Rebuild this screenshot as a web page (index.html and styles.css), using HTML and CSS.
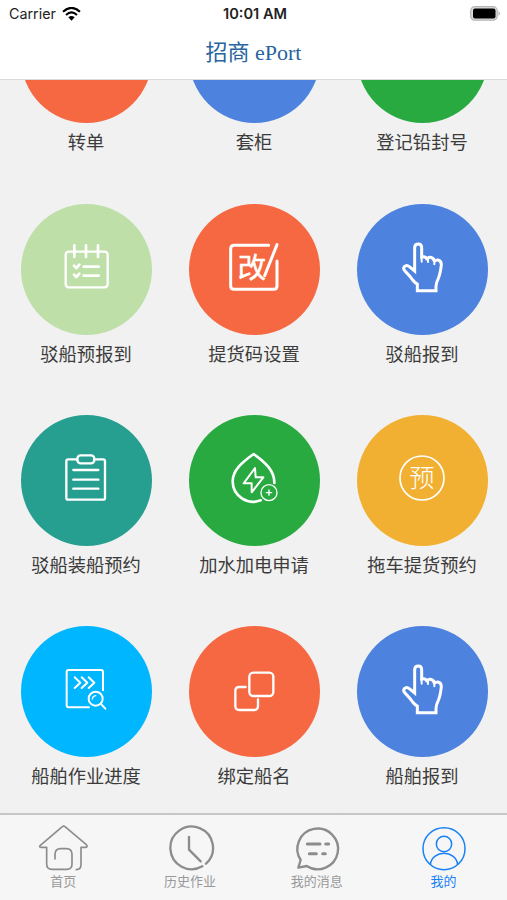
FILE: index.html
```
<!DOCTYPE html>
<html lang="zh-CN">
<head>
	<meta charset="utf-8">
	<meta name="viewport" content="width=device-width, initial-scale=1">
	<title>招商 ePort</title>
	<link rel="stylesheet" href="styles.css">
</head>
<body>

<header>
	<div class="status">
		<div class="carrier">
			<span>Carrier</span>
			<svg width="19" height="14" viewBox="0 0 57 42">
				<path d="M3 14 Q28.500 -9 54 14" class="wifi"/>
				<path d="M12 24 Q28.500 8 45 24" class="wifi"/>
				<path d="M19 31 Q28.500 23 38 31 L28.500 41z"/>
			</svg>
		</div>
		<div class="time">10:01 AM</div>
		<svg class="battery" width="31" height="15" viewBox="0 0 31 15">
			<rect x="0.700" y="0.700" width="26.500" height="13.500" rx="4" fill="#ddd" stroke="#b5b5b5" stroke-width="1.200"/>
			<rect x="3" y="2.500" width="22.500" height="10" rx="2"/>
			<path d="M28.500 5 Q31.500 7.500 28.500 10z" fill="#b5b5b5"/>
		</svg>
	</div>
	<h1>招商 ePort</h1>
</header>

<main>
	<ul class="menu">
		<li><div class="circle red"></div><span>转单</span></li>
		<li><div class="circle blue"></div><span>套柜</span></li>
		<li><div class="circle green"></div><span>登记铅封号</span></li>

		<li>
			<div class="circle lime">
				<svg viewBox="2 11 393 393" stroke-width="7">
					<rect x="136" y="154" width="126" height="107" rx="9"/>
					<path d="M162 135v35M197 135v35M233 135v35" stroke-width="8"/>
					<path d="M190 199h45M190 226h45M161 196l7 7 9-10M161 223l7 7 9-10" stroke-width="8"/>
				</svg>
			</div>
			<span>驳船预报到</span>
		</li>
		<li>
			<div class="circle red">
				<svg viewBox="14 11 393 393" stroke-width="9">
					<path d="M253 135H150q-11 0-11 11V256q0 11 11 11H268q10 0 10-11V182"/>
					<path d="M278 133L241 226"/>
					<text class="bold" x="160" y="233" font-size="85">改</text>
				</svg>
			</div>
			<span>提货码设置</span>
		</li>
		<li>
			<div class="circle blue">
				<svg viewBox="14 11 393 393" stroke-width="9">
					<path class="hand" d="M195 271H251V258Q251 248 258 234Q264 221 267 193Q267 181 257 179Q249 178 246 184Q246 173 234 171Q226 170 225 179Q221 167 208 170V142Q208 131 198 131Q187 131 187 142V212L171 199Q163 192 156 199Q151 206 159 213Q172 226 181 239Q187 247 195 251z"/>
					<path d="M208 170v14M227 177v8M246 184v8" stroke-width="6"/>
				</svg>
			</div>
			<span>驳船报到</span>
		</li>

		<li>
			<div class="circle teal">
				<svg viewBox="2 15 393 393" stroke-width="7">
					<path d="M171 148H144q-6 0-6 6V263q0 6 6 6H248q6 0 6-6V154q0-6-6-6H222"/>
					<rect x="171" y="136" width="51" height="24" rx="10"/>
					<path d="M159 180h75M159 209h75M159 236h75"/>
				</svg>
			</div>
			<span>驳船装船预约</span>
		</li>
		<li>
			<div class="circle green">
				<svg viewBox="14 15 393 393" stroke-width="8">
					<path d="M229 271C191 286 145 259 145 214C145 181 173 157 208 132C242 156 271 182 270 219"/>
					<path d="M212 174L178 220H202V247L237 202H214z" stroke-width="6"/>
					<circle cx="254" cy="248" r="24" stroke-width="4"/>
					<path d="M246 248h16M254 240v16" stroke-width="4"/>
				</svg>
			</div>
			<span>加水加电申请</span>
		</li>
		<li>
			<div class="circle yellow">
				<svg viewBox="14 15 393 393" stroke-width="5">
					<circle cx="209" cy="204" r="66"/>
					<text class="thin" x="171" y="231" font-size="76">预</text>
				</svg>
			</div>
			<span>拖车提货预约</span>
		</li>

		<li>
			<div class="circle sky">
				<svg viewBox="2 18 393 393" stroke-width="6">
					<path d="M206 262H145q-6 0-6-6V156q0-6 6-6H242q6 0 6 6V211"/>
					<path d="M163 172l17 16-17 16M184 172l17 16-17 16M205 172l17 16-17 16"/>
					<circle cx="226" cy="236" r="21"/>
					<path d="M241 251L255 266"/>
					<path d="M216 237q1-9 10-10" stroke-width="4"/>
				</svg>
			</div>
			<span>船舶作业进度</span>
		</li>
		<li>
			<div class="circle red">
				<svg viewBox="14 18 393 393" stroke-width="7">
					<rect x="195" y="158" width="72" height="70" rx="12"/>
					<path d="M184 201H165q-12 0-12 12V258q0 12 12 12H209q12 0 12-12V238"/>
				</svg>
			</div>
			<span>绑定船名</span>
		</li>
		<li>
			<div class="circle blue">
				<svg viewBox="14 11 393 393" stroke-width="9">
					<path class="hand" d="M195 271H251V258Q251 248 258 234Q264 221 267 193Q267 181 257 179Q249 178 246 184Q246 173 234 171Q226 170 225 179Q221 167 208 170V142Q208 131 198 131Q187 131 187 142V212L171 199Q163 192 156 199Q151 206 159 213Q172 226 181 239Q187 247 195 251z"/>
					<path d="M208 170v14M227 177v8M246 184v8" stroke-width="6"/>
				</svg>
			</div>
			<span>船舶报到</span>
		</li>
	</ul>
</main>

<nav>
	<a href="#">
		<svg viewBox="-1 0 150 150" stroke-width="5">
			<path d="M50 105V91q0-17 17-17H84q17 0 17 17V120q0 16-16 16H41q-16 0-16-16V70H8q-7 0-2-6L72 8q4-4 8 0L144 62q5 7-2 8H128V122q0 14-14 15"/>
		</svg>
		<span>首页</span>
	</a>
	<a href="#">
		<svg viewBox="-1 -2 150 150" stroke-width="7">
			<path d="M111 125A64 64 0 1 1 122 117"/>
			<path d="M71 37V75L106 110"/>
		</svg>
		<span>历史作业</span>
	</a>
	<a href="#">
		<svg viewBox="0 0 150 150" stroke-width="7">
			<path d="M44 126L19 131L26 108A61 61 0 1 1 44 126"/>
			<path d="M46 60h38M101 60h9M52 89h21M92 89h8" stroke-width="9"/>
		</svg>
		<span>我的消息</span>
	</a>
	<a href="#" class="active">
		<svg viewBox="0 0 150 150" stroke-width="4.500">
			<circle cx="75" cy="74" r="63"/>
			<circle cx="75" cy="60" r="23"/>
			<path d="M34 121C40 77 110 77 116 121"/>
		</svg>
		<span>我的</span>
	</a>
</nav>

</body>
</html>
```
FILE: styles.css
```
* {
	box-sizing: border-box;
}

body {
	margin: 0;
	height: 900px;
	display: flex;
	flex-direction: column;
	overflow: hidden;
	background-color: #f1f1f1;
	font-family: "Liberation Sans", "Noto Sans CJK SC", sans-serif;
}

header {
	height: 80px;
	flex-shrink: 0;
	background-color: #fff;
	border-bottom: 1px solid #dadada;
}

.status {
	height: 27px;
	padding: 0 6px 0 9px;
	display: grid;
	grid-template-columns: 1fr auto 1fr;
	align-items: center;
	font-family: Inter, "Liberation Sans", sans-serif;
	font-size: 14.3px;
	color: #222;
}

.carrier {
	display: flex;
	align-items: center;
	gap: 6px;
}

.wifi {
	fill: none;
	stroke: #000;
	stroke-width: 6;
}

.time {
	font-size: 14.6px;
	font-weight: 600;
}

.battery {
	justify-self: end;
}

h1 {
	margin: 0;
	line-height: 52px;
	text-align: center;
	font-family: "Liberation Serif", "Noto Sans CJK SC", serif;
	font-size: 22px;
	font-weight: normal;
	color: #2864a0;
}

main {
	flex: 1;
	min-height: 0;
	overflow: hidden;
}

/* scrolled part way down the list */
.menu {
	list-style: none;
	margin: -87.6px 0 0;
	padding: 0 1px 0 2px;
	display: grid;
	grid-template-columns: repeat(3, 168px);
	grid-auto-rows: 211.3px;
}

.menu li {
	display: flex;
	flex-direction: column;
	align-items: center;
	box-shadow: -1px 0 #efefef;
}

.menu span {
	margin-top: 7px;
	line-height: 26px;
	font-size: 18.3px;
	color: #3c3c3c;
}

.circle {
	width: 131px;
	height: 131px;
	border-radius: 50%;
}

.circle svg {
	display: block;
	width: 131px;
	height: 131px;
	fill: none;
	stroke: #fff;
	stroke-linecap: round;
	stroke-linejoin: round;
}

.circle svg .hand {
	stroke-linejoin: miter;
}

.circle text {
	fill: #fff;
	stroke: none;
}

.circle .bold {
	stroke: #fff;
	stroke-width: 1.5;
}

.circle .thin {
	font-weight: 300;
}

.red {
	background-color: #f56842;
}

.blue {
	background-color: #4d82de;
}

.green {
	background-color: #28aa41;
}

.lime {
	background-color: #bfdfa9;
}

.teal {
	background-color: #269f90;
}

.yellow {
	background-color: #f1b031;
}

.sky {
	background-color: #00b7ff;
}

nav {
	height: 87px;
	flex-shrink: 0;
	display: flex;
	background-color: #f6f6f6;
	border-top: 2px solid #c6c6c6;
}

nav a {
	flex: 1;
	padding-top: 9px;
	display: flex;
	flex-direction: column;
	align-items: center;
	font-size: 13px;
	line-height: 16px;
	text-decoration: none;
	color: #999;
}

nav svg {
	width: 50px;
	height: 50px;
	fill: none;
	stroke: #8c8c8c;
	stroke-linecap: round;
	stroke-linejoin: round;
}

nav .active {
	color: #1781f5;
}

nav .active svg {
	stroke: #1781f5;
}
```
